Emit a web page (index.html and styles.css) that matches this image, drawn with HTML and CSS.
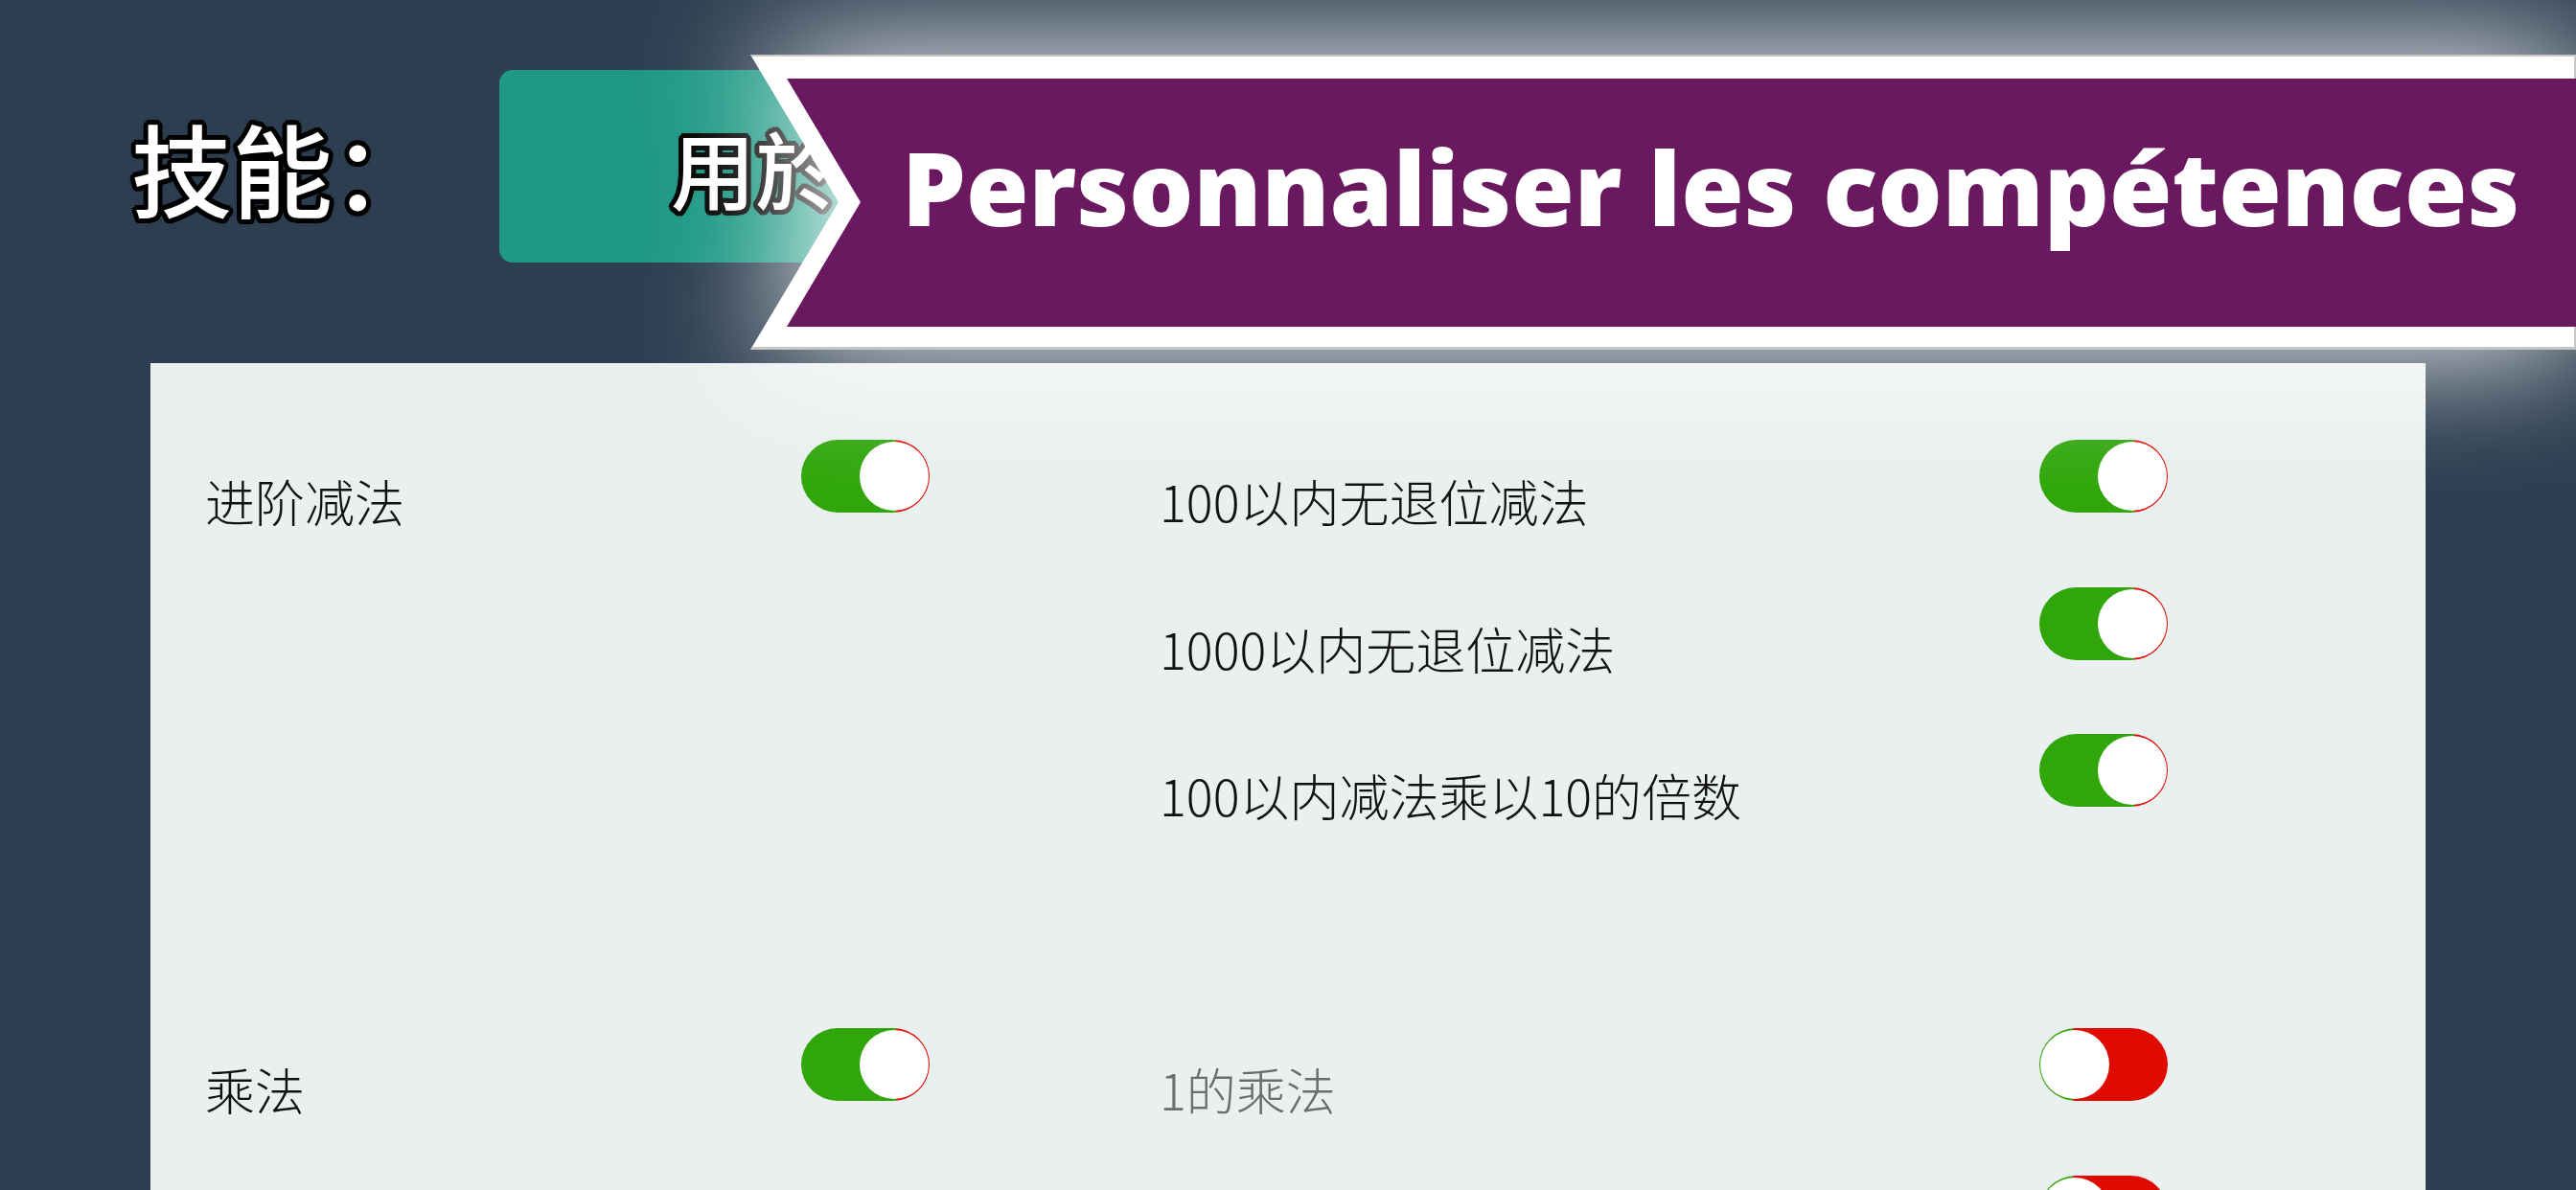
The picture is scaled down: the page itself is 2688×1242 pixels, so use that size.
FILE: index.html
```html
<!DOCTYPE html>
<html lang="zh">
<head>
<meta charset="utf-8">
<title>技能</title>
<link rel="stylesheet" href="styles.css">
</head>
<body>
<div class="screen">
  <header class="header">
    <h1 class="title">技能：</h1>
    <div class="tab"><span class="tab-text">用於</span></div>
  </header>

  <section class="panel">
    <div class="group">
      <div class="cat">
        <span class="label">进阶减法</span>
        <span class="toggle on"><span class="knob"></span></span>
      </div>
      <div class="items">
        <div class="item">
          <span class="label">100以内无退位减法</span>
          <span class="toggle on"><span class="knob"></span></span>
        </div>
        <div class="item">
          <span class="label">1000以内无退位减法</span>
          <span class="toggle on"><span class="knob"></span></span>
        </div>
        <div class="item">
          <span class="label">100以内减法乘以10的倍数</span>
          <span class="toggle on"><span class="knob"></span></span>
        </div>
      </div>
    </div>

    <div class="group">
      <div class="cat">
        <span class="label">乘法</span>
        <span class="toggle on"><span class="knob"></span></span>
      </div>
      <div class="items">
        <div class="item">
          <span class="label muted">1的乘法</span>
          <span class="toggle off"><span class="knob"></span></span>
        </div>
        <div class="item">
          <span class="label muted"></span>
          <span class="toggle off"><span class="knob"></span></span>
        </div>
      </div>
    </div>
  </section>

  <div class="banner">
    <div class="banner-outer">
      <div class="banner-inner">
        <span class="banner-text">Personnaliser les compétences</span>
      </div>
    </div>
  </div>
</div>
</body>
</html>
```

FILE: styles.css
```css
html, body {
  margin: 0;
  padding: 0;
}

body {
  width: 2688px;
  height: 1242px;
  overflow: hidden;
  background: #2c3e50;
  font-family: "Noto Sans CJK SC", "Noto Sans", sans-serif;
}

.screen {
  position: relative;
  width: 2688px;
  height: 1242px;
  display: flex;
  flex-direction: column;
  overflow: hidden;
}

/* ---------- header ---------- */
.header {
  display: flex;
  align-items: center;
  gap: 69px;
  height: 201px;
  padding: 73px 0 0 137px;
  margin-bottom: 105px;
  flex: none;
}

.title {
  margin: 0;
  font-size: 105px;
  line-height: 1;
  font-weight: 500;
  color: #fff;
  text-shadow:
    5px 0 0 #000, -5px 0 0 #000, 0 5px 0 #000, 0 -5px 0 #000,
    3.5px 3.5px 0 #000, -3.5px 3.5px 0 #000, 3.5px -3.5px 0 #000, -3.5px -3.5px 0 #000,
    4.6px 1.9px 0 #000, -4.6px 1.9px 0 #000, 4.6px -1.9px 0 #000, -4.6px -1.9px 0 #000,
    1.9px 4.6px 0 #000, -1.9px 4.6px 0 #000, 1.9px -4.6px 0 #000, -1.9px -4.6px 0 #000,
    0 0 6px #000;
}

.tab {
  width: 420px;
  height: 201px;
  border-radius: 14px;
  background: #1e9985;
  display: flex;
  align-items: center;
  padding-left: 179px;
  box-sizing: border-box;
  flex: none;
}

.tab-text {
  font-size: 88px;
  line-height: 1;
  font-weight: 500;
  color: #fff;
  text-shadow:
    5px 0 0 #000, -5px 0 0 #000, 0 5px 0 #000, 0 -5px 0 #000,
    3.5px 3.5px 0 #000, -3.5px 3.5px 0 #000, 3.5px -3.5px 0 #000, -3.5px -3.5px 0 #000,
    4.6px 1.9px 0 #000, -4.6px 1.9px 0 #000, 4.6px -1.9px 0 #000, -4.6px -1.9px 0 #000,
    1.9px 4.6px 0 #000, -1.9px 4.6px 0 #000, 1.9px -4.6px 0 #000, -1.9px -4.6px 0 #000,
    0 0 6px #000;
}

/* ---------- panel ---------- */
.panel {
  flex: 1;
  width: 2374px;
  margin-left: 157px;
  background: #eaf0f0;
  padding: 80px 0 0 57px;
  box-sizing: border-box;
}

.group {
  display: flex;
  gap: 240px;
  padding-bottom: 153.5px;
}

.cat {
  width: 756px;
  height: 153.5px;
  display: flex;
  justify-content: space-between;
  align-items: flex-start;
  flex: none;
}

.items {
  width: 1052px;
  flex: none;
}

.item {
  height: 153.5px;
  display: flex;
  justify-content: space-between;
  align-items: flex-start;
}

.label {
  font-size: 52px;
  line-height: 60px;
  padding-top: 34px;
  color: #111;
  font-weight: 300;
  white-space: nowrap;
}

.label.muted {
  color: #6d6d6d;
}

/* ---------- toggles ---------- */
.toggle {
  position: relative;
  width: 134px;
  height: 76px;
  border-radius: 38px;
  flex: none;
}

.toggle.on {
  background: linear-gradient(90deg, #30a60b 0 74%, #e00b00 74%);
}

.toggle.off {
  background: linear-gradient(90deg, #30a60b 0 26%, #e00b00 26%);
}

.knob {
  position: absolute;
  top: 2px;
  width: 72px;
  height: 72px;
  border-radius: 50%;
  background: #fff;
}

.toggle.on .knob {
  right: 1px;
}

.toggle.off .knob {
  left: 1px;
}

/* ---------- banner overlay ---------- */
.banner {
  position: absolute;
  left: 783px;
  top: 57px;
  width: 1905px;
  height: 308px;
  filter: drop-shadow(0 0 70px #ffffff);
}

.banner-outer {
  width: 100%;
  height: 100%;
  box-sizing: border-box;
  padding: 25px 0 24px;
  display: flex;
  flex-direction: column;
  background: #ffffff;
  box-shadow: inset 0 2px 0 #c6c6c6, inset 0 -3px 0 #c6c6c6, inset -2px 0 0 #c6c6c6;
  clip-path: polygon(0 0, 100% 0, 100% 100%, 0 100%, 92px 154px);
}

.banner-inner {
  flex: 1;
  background: #6a1961;
  clip-path: polygon(38px 0, 100% 0, 100% 100%, 38px 100%, 115px 129px);
  display: flex;
  align-items: flex-start;
  padding: 50px 0 0 158px;
}

.banner-text {
  font-family: "Open Sans", "Lato", sans-serif;
  font-weight: 800;
  font-size: 106px;
  line-height: 1.2;
  color: #fff;
  white-space: nowrap;
}
```
